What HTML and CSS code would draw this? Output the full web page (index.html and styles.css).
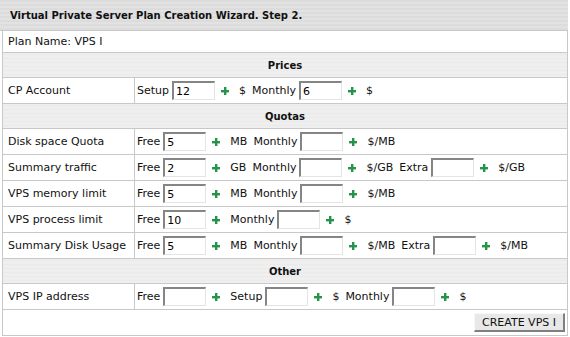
FILE: index.html
```html
<!DOCTYPE html>
<html lang="en">
<head>
    <meta charset="UTF-8">
    <title>VPS Plan Wizard</title>
    <link rel="stylesheet" href="styles.css">
</head>
<body>
    <div class="wizard">
        <div class="wizard-title">Virtual Private Server Plan Creation Wizard. Step 2.</div>
        <table class="plan-table">
            <tr class="plan-row">
                <td colspan="2">Plan Name: VPS I</td>
            </tr>
            <tr class="section">
                <td colspan="2">Prices</td>
            </tr>
            <tr>
                <td class="label">CP Account</td>
                <td>
                    <div class="fields">
                        <span>Setup</span><input type="text" value="12"><span class="plus"></span><span class="unit">$</span>
                        <span>Monthly</span><input type="text" value="6"><span class="plus"></span><span class="unit">$</span>
                    </div>
                </td>
            </tr>
            <tr class="section">
                <td colspan="2">Quotas</td>
            </tr>
            <tr>
                <td class="label">Disk space Quota</td>
                <td>
                    <div class="fields">
                        <span>Free</span><input type="text" value="5"><span class="plus"></span><span class="unit">MB</span>
                        <span>Monthly</span><input type="text"><span class="plus"></span><span class="unit">$/MB</span>
                    </div>
                </td>
            </tr>
            <tr>
                <td class="label">Summary traffic</td>
                <td>
                    <div class="fields">
                        <span>Free</span><input type="text" value="2"><span class="plus"></span><span class="unit">GB</span>
                        <span>Monthly</span><input type="text"><span class="plus"></span><span class="unit">$/GB</span>
                        <span>Extra</span><input type="text"><span class="plus"></span><span class="unit">$/GB</span>
                    </div>
                </td>
            </tr>
            <tr>
                <td class="label">VPS memory limit</td>
                <td>
                    <div class="fields">
                        <span>Free</span><input type="text" value="5"><span class="plus"></span><span class="unit">MB</span>
                        <span>Monthly</span><input type="text"><span class="plus"></span><span class="unit">$/MB</span>
                    </div>
                </td>
            </tr>
            <tr>
                <td class="label">VPS process limit</td>
                <td>
                    <div class="fields">
                        <span>Free</span><input type="text" value="10"><span class="plus"></span>
                        <span>Monthly</span><input type="text"><span class="plus"></span><span class="unit">$</span>
                    </div>
                </td>
            </tr>
            <tr>
                <td class="label">Summary Disk Usage</td>
                <td>
                    <div class="fields">
                        <span>Free</span><input type="text" value="5"><span class="plus"></span><span class="unit">MB</span>
                        <span>Monthly</span><input type="text"><span class="plus"></span><span class="unit">$/MB</span>
                        <span>Extra</span><input type="text"><span class="plus"></span><span class="unit">$/MB</span>
                    </div>
                </td>
            </tr>
            <tr class="section">
                <td colspan="2">Other</td>
            </tr>
            <tr>
                <td class="label">VPS IP address</td>
                <td>
                    <div class="fields">
                        <span>Free</span><input type="text"><span class="plus"></span>
                        <span>Setup</span><input type="text"><span class="plus"></span><span class="unit">$</span>
                        <span>Monthly</span><input type="text"><span class="plus"></span><span class="unit">$</span>
                    </div>
                </td>
            </tr>
            <tr class="actions">
                <td colspan="2"><button>CREATE VPS I</button></td>
            </tr>
        </table>
    </div>

    <script>
        // plus icons are the same everywhere, fill them in once
        const plusIcon = '<svg width="8" height="8" viewBox="0 0 8 8"><rect x="3" y="0" width="2.4" height="8" fill="#23944a"/><rect x="0" y="3" width="8" height="2.4" fill="#23944a"/></svg>';
        document.querySelectorAll('.plus').forEach(el => el.innerHTML = plusIcon);
    </script>
</body>
</html>
```

FILE: styles.css
```css
body {
    margin: 0;
    padding: 0;
    background-color: #fff;
    font-family: "DejaVu Sans", Verdana, sans-serif;
    font-size: 11px;
    color: #111;
}
.wizard {
    width: 568px;
}
.wizard-title {
    height: 31px;
    line-height: 31px;
    padding-left: 10px;
    font-weight: bold;
    font-size: 10px;
    background: repeating-linear-gradient(#dcdcdc 0, #dcdcdc 2px, #e2e2e2 2px, #e2e2e2 4px);
    border-bottom: 1px solid #c8c8c8;
    box-sizing: border-box;
}
.plan-table {
    width: 566px;
    margin-left: 2px;
    border-collapse: collapse;
    border: 1px solid #c8c8c8;
    border-top: none;
}
.plan-table td {
    border: 1px solid #c8c8c8;
    padding: 0 2px;
    height: 25px;
}
.plan-table .plan-row td {
    height: 21px;
    padding-left: 5px;
    border-top: none;
}
.plan-table .label {
    width: 124px;
    padding-left: 5px;
}
.section td {
    height: 24px;
    text-align: center;
    font-weight: bold;
    font-size: 10px;
    background: repeating-linear-gradient(#ebebeb 0, #ebebeb 2px, #f0f0f0 2px, #f0f0f0 4px);
}
.fields {
    display: flex;
    align-items: center;
}
.fields input {
    width: 43px;
    height: 19px;
    box-sizing: border-box;
    margin: 0 0 0 3px;
    padding: 0 2px;
    font-family: inherit;
    font-size: 11px;
    border-style: solid;
    border-width: 2px 1px 1px 2px;
    border-color: #858585 #e4e4e4 #e4e4e4 #858585;
    background: #fff;
}
.plus {
    display: inline-flex;
    margin: 0 10px 0 6px;
}
.unit {
    margin-right: 6px;
}
.actions td {
    text-align: right;
    padding-right: 2px;
}
.actions button {
    font-family: inherit;
    font-size: 11px;
    color: #111;
    height: 19px;
    padding: 0 7px;
    background: #e8e8e8;
    border-style: solid;
    border-width: 1px 2px 2px 1px;
    border-color: #f8f8f8 #808080 #808080 #f8f8f8;
}
```
